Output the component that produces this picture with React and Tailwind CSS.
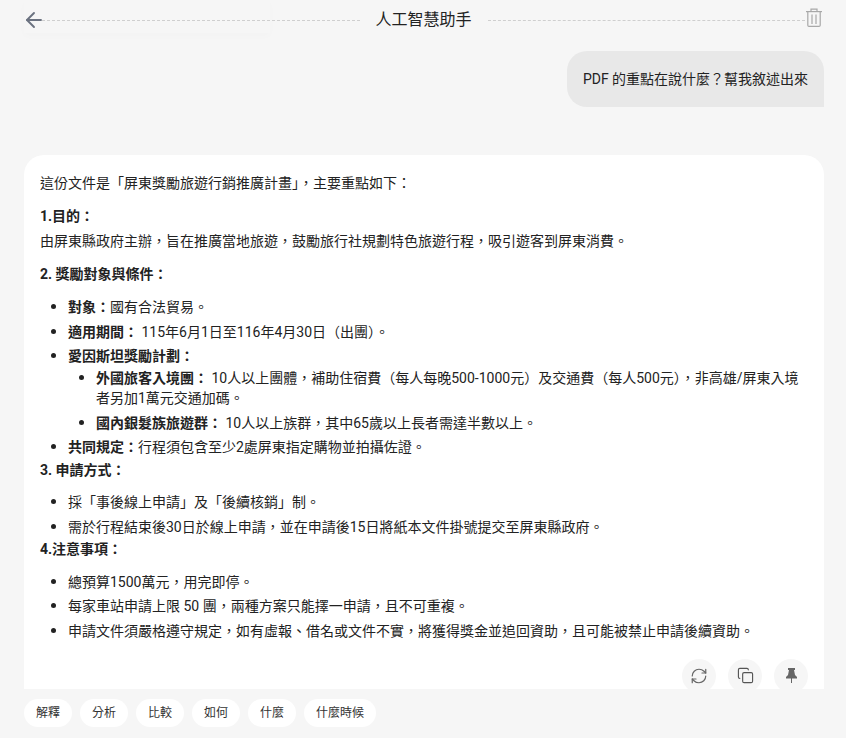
import React from 'react';
import { ArrowLeft, RefreshCw, Copy } from 'lucide-react';

const chips = [
  { label: '解釋', width: 'w-12' },
  { label: '分析', width: 'w-12' },
  { label: '比較', width: 'w-12' },
  { label: '如何', width: 'w-12' },
  { label: '什麼', width: 'w-12' },
  { label: '什麼時候', width: 'w-[72px]' },
];

function TrashIcon() {
  return (
    <svg width="18" height="19" viewBox="0 0 18 19" fill="none" stroke="currentColor" strokeWidth="1.2" className="shrink-0 -mt-[5px] text-[#a8a8a8]">
      <path d="M1 3.6h16" />
      <path d="M6 3.4V1.2h6v2.2" />
      <path d="M2.8 4v13.2c0 .7.5 1.2 1.2 1.2h10c.7 0 1.2-.5 1.2-1.2V4" />
      <path d="M7 6.5v9.5M11 6.5v9.5" />
    </svg>
  );
}

function PinIcon() {
  return (
    <svg width="11" height="15" viewBox="0 0 11 15" fill="currentColor">
      <path d="M2 0h7v2H8l1 5 2 2v1.5H6V15H5v-4.5H0V9l2-2 1-5H2z" />
    </svg>
  );
}

function Header() {
  return (
    <header className="relative h-[40px] pl-[22px] pr-[23px] flex items-center">
      <div className="absolute left-6 top-0 w-[246px] h-[33px] shadow-[0_3px_8px_rgba(0,0,0,0.015)] pointer-events-none" />
      <ArrowLeft size={24} strokeWidth={1.9} className="relative text-[#6b7280] shrink-0 -mr-1" />
      <div className="relative flex-1 border-t border-dashed border-[#cfcfcf]" />
      <h1 className="px-4 text-base leading-6 text-[#222]">人工智慧助手</h1>
      <div className="flex-1 border-t border-dashed border-[#cfcfcf]" />
      <TrashIcon />
    </header>
  );
}

function Answer() {
  return (
    <div className="mt-[48px] bg-white rounded-t-[20px] px-4 pt-[18px] pb-6 text-sm leading-5 text-[#222]">
      <p className="mb-[13px]">這份文件是「屏東獎勵旅遊行銷推廣計畫」，主要重點如下：</p>
      <p className="font-bold mb-[5px]">1.目的：</p>
      <p className="mb-[13px]">由屏東縣政府主辦，旨在推廣當地旅遊，鼓勵旅行社規劃特色旅遊行程，吸引遊客到屏東消費。</p>
      <p className="font-bold mb-[13px]">2. 獎勵對象與條件：</p>
      <ul className="list-disc pl-7">
        <li className="mb-[4.5px]"><b>對象：</b>國有合法貿易。</li>
        <li className="mb-[4.5px]"><b>適用期間：</b> 115年6月1日至116年4月30日（出團）。</li>
        <li className="mb-[3.5px]">
          <b className="block">愛因斯坦獎勵計劃：</b>
          <ul className="list-disc pl-7 mt-[2px]">
            <li className="mb-[5px]"><b>外國旅客入境團：</b> 10人以上團體，補助住宿費（每人每晚500-1000元）及交通費（每人500元），非高雄/屏東入境者另加1萬元交通加碼。</li>
            <li><b>國內銀髮族旅遊群：</b> 10人以上族群，其中65歲以上長者需達半數以上。</li>
          </ul>
        </li>
        <li className="mb-[3px]"><b>共同規定：</b>行程須包含至少2處屏東指定購物並拍攝佐證。</li>
      </ul>
      <p className="font-bold mb-3">3. 申請方式：</p>
      <ul className="list-disc pl-7">
        <li className="mb-[5px]">採「事後線上申請」及「後續核銷」制。</li>
        <li className="mb-[2px]">需於行程結束後30日於線上申請，並在申請後15日將紙本文件掛號提交至屏東縣政府。</li>
      </ul>
      <p className="font-bold mb-[13px]">4.注意事項：</p>
      <ul className="list-disc pl-7">
        <li className="mb-1">總預算1500萬元，用完即停。</li>
        <li className="mb-[5px]">每家車站申請上限 50 團，兩種方案只能擇一申請，且不可重複。</li>
        <li>申請文件須嚴格遵守規定，如有虛報、借名或文件不實，將獲得獎金並追回資助，且可能被禁止申請後續資助。</li>
      </ul>
      <div className="mt-[18px] flex justify-end gap-3">
        <button className="w-[34px] h-[34px] rounded-full bg-[#f6f6f6] flex items-center justify-center text-[#666]">
          <RefreshCw size={18} strokeWidth={1.6} />
        </button>
        <button className="w-[34px] h-[34px] rounded-full bg-[#f6f6f6] flex items-center justify-center text-[#555]">
          <Copy size={17} strokeWidth={1.6} />
        </button>
        <button className="w-[34px] h-[34px] rounded-full bg-[#f6f6f6] flex items-center justify-center text-[#666]">
          <PinIcon />
        </button>
      </div>
    </div>
  );
}

export default function App() {
  return (
    <div className="h-[738px] flex flex-col bg-[#f6f6f6] overflow-hidden font-['Roboto','Noto_Sans_CJK_TC',sans-serif] marker:font-['Noto_Sans']">
      <Header />
      <main className="flex-1 min-h-0 overflow-hidden pl-6 pr-[22px] pt-[11px]">
        <div className="flex justify-end">
          <div className="w-[257px] h-[56px] bg-[#e8e8e8] rounded-t-[20px] rounded-bl-[20px] flex items-center justify-center text-sm text-[#222]">
            PDF 的重點在說什麼？幫我敘述出來
          </div>
        </div>
        <Answer />
      </main>
      <footer className="h-[49px] shrink-0 pl-6 pt-[10px] flex gap-2">
        {chips.map((chip) => (
          <button key={chip.label} className={`${chip.width} h-[28px] rounded-full bg-white text-xs text-[#333]`}>
            {chip.label}
          </button>
        ))}
      </footer>
    </div>
  );
}
